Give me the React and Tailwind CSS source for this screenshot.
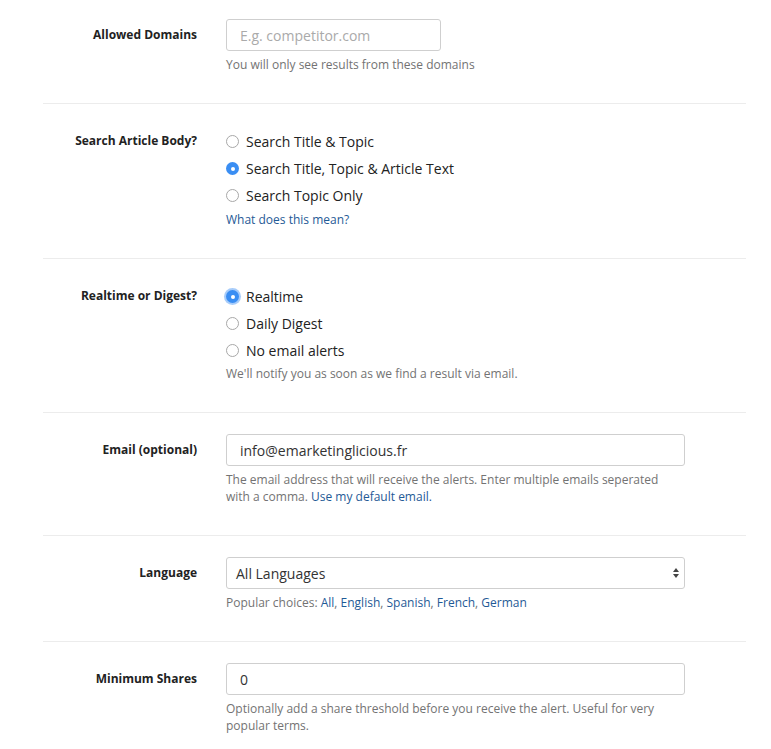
const font = { fontFamily: '"Open Sans", sans-serif' };

function Radio({ checked, focus, label }) {
  return (
    <div className="flex items-center h-[27px]">
      {checked ? (
        <span className={`w-[13px] h-[13px] rounded-full bg-[#3a8ef3] flex items-center justify-center ${focus ? "shadow-[0_0_0_2px_rgba(59,142,243,0.45)]" : ""}`}>
          <span className="w-[4px] h-[4px] rounded-full bg-white" />
        </span>
      ) : (
        <span className="w-[13px] h-[13px] rounded-full border border-[#a8a8a8] bg-white" />
      )}
      <span className="ml-[7px] text-[14px] text-[#222]">{label}</span>
    </div>
  );
}

function Row({ label, children, top = "pt-[21px]", border = true, labelPt = "pt-[7px]" }) {
  return (
    <div className={`flex ${top} pb-[30px] ${border ? "border-b border-[#ececec]" : ""}`}>
      <div className={`w-[154px] text-right text-[12px] font-bold text-[#222] ${labelPt} leading-[17px]`}>{label}</div>
      <div className="ml-[29px] flex-1">{children}</div>
    </div>
  );
}

const Help = ({ children, mt = "mt-[5px]" }) => (
  <div className={`${mt} text-[12px] leading-[17px] text-[#737373]`}>{children}</div>
);
const A = ({ children }) => <span className="text-[#1f5a96]">{children}</span>;

const inputCls = "h-[32px] border border-[#cfcfcf] rounded-[3px] bg-white flex items-center text-[14px]";

export default function App() {
  return (
    <div style={font} className="bg-white w-[771px] h-[749px] overflow-hidden">
      <div className="ml-[43px] mr-[25px]">
        <Row label="Allowed Domains" top="pt-[19px]">
          <div className={`${inputCls} w-[215px] pl-[13px] text-[#aaa] text-[13px]`}>E.g. competitor.com</div>
          <Help>You will only see results from these domains</Help>
        </Row>
        <Row label="Search Article Body?" top="pt-[24px]" labelPt="pt-[4px]">
          <Radio label="Search Title & Topic" />
          <Radio checked label="Search Title, Topic & Article Text" />
          <Radio label="Search Topic Only" />
          <Help mt="mt-[2px]"><A>What does this mean?</A></Help>
        </Row>
        <Row label="Realtime or Digest?" top="pt-[24px]" labelPt="pt-[4px]">
          <Radio checked focus label="Realtime" />
          <Radio label="Daily Digest" />
          <Radio label="No email alerts" />
          <Help mt="mt-[1px]">We'll notify you as soon as we find a result via email.</Help>
        </Row>
        <Row label="Email (optional)">
          <div className={`${inputCls} w-[459px] pl-[13px] text-[#333] text-[13px]`}>info@emarketinglicious.fr</div>
          <Help>The email address that will receive the alerts. Enter multiple emails seperated<br />with a comma. <A>Use my default email.</A></Help>
        </Row>
        <Row label="Language">
          <div className={`${inputCls} w-[459px] pl-[9px] pr-[4px] text-[#333] justify-between`}>
            <span>All Languages</span>
            <svg width="8" height="12" viewBox="0 0 8 12"><path d="M4 1L7 5H1z M4 11L1 7H7z" fill="#444" /></svg>
          </div>
          <Help>Popular choices: <A>All</A>, <A>English</A>, <A>Spanish</A>, <A>French</A>, <A>German</A></Help>
        </Row>
        <Row label="Minimum Shares" border={false}>
          <div className={`${inputCls} w-[459px] pl-[13px] text-[#333] text-[13px]`}>0</div>
          <Help>Optionally add a share threshold before you receive the alert. Useful for very<br />popular terms.</Help>
        </Row>
      </div>
    </div>
  );
}
